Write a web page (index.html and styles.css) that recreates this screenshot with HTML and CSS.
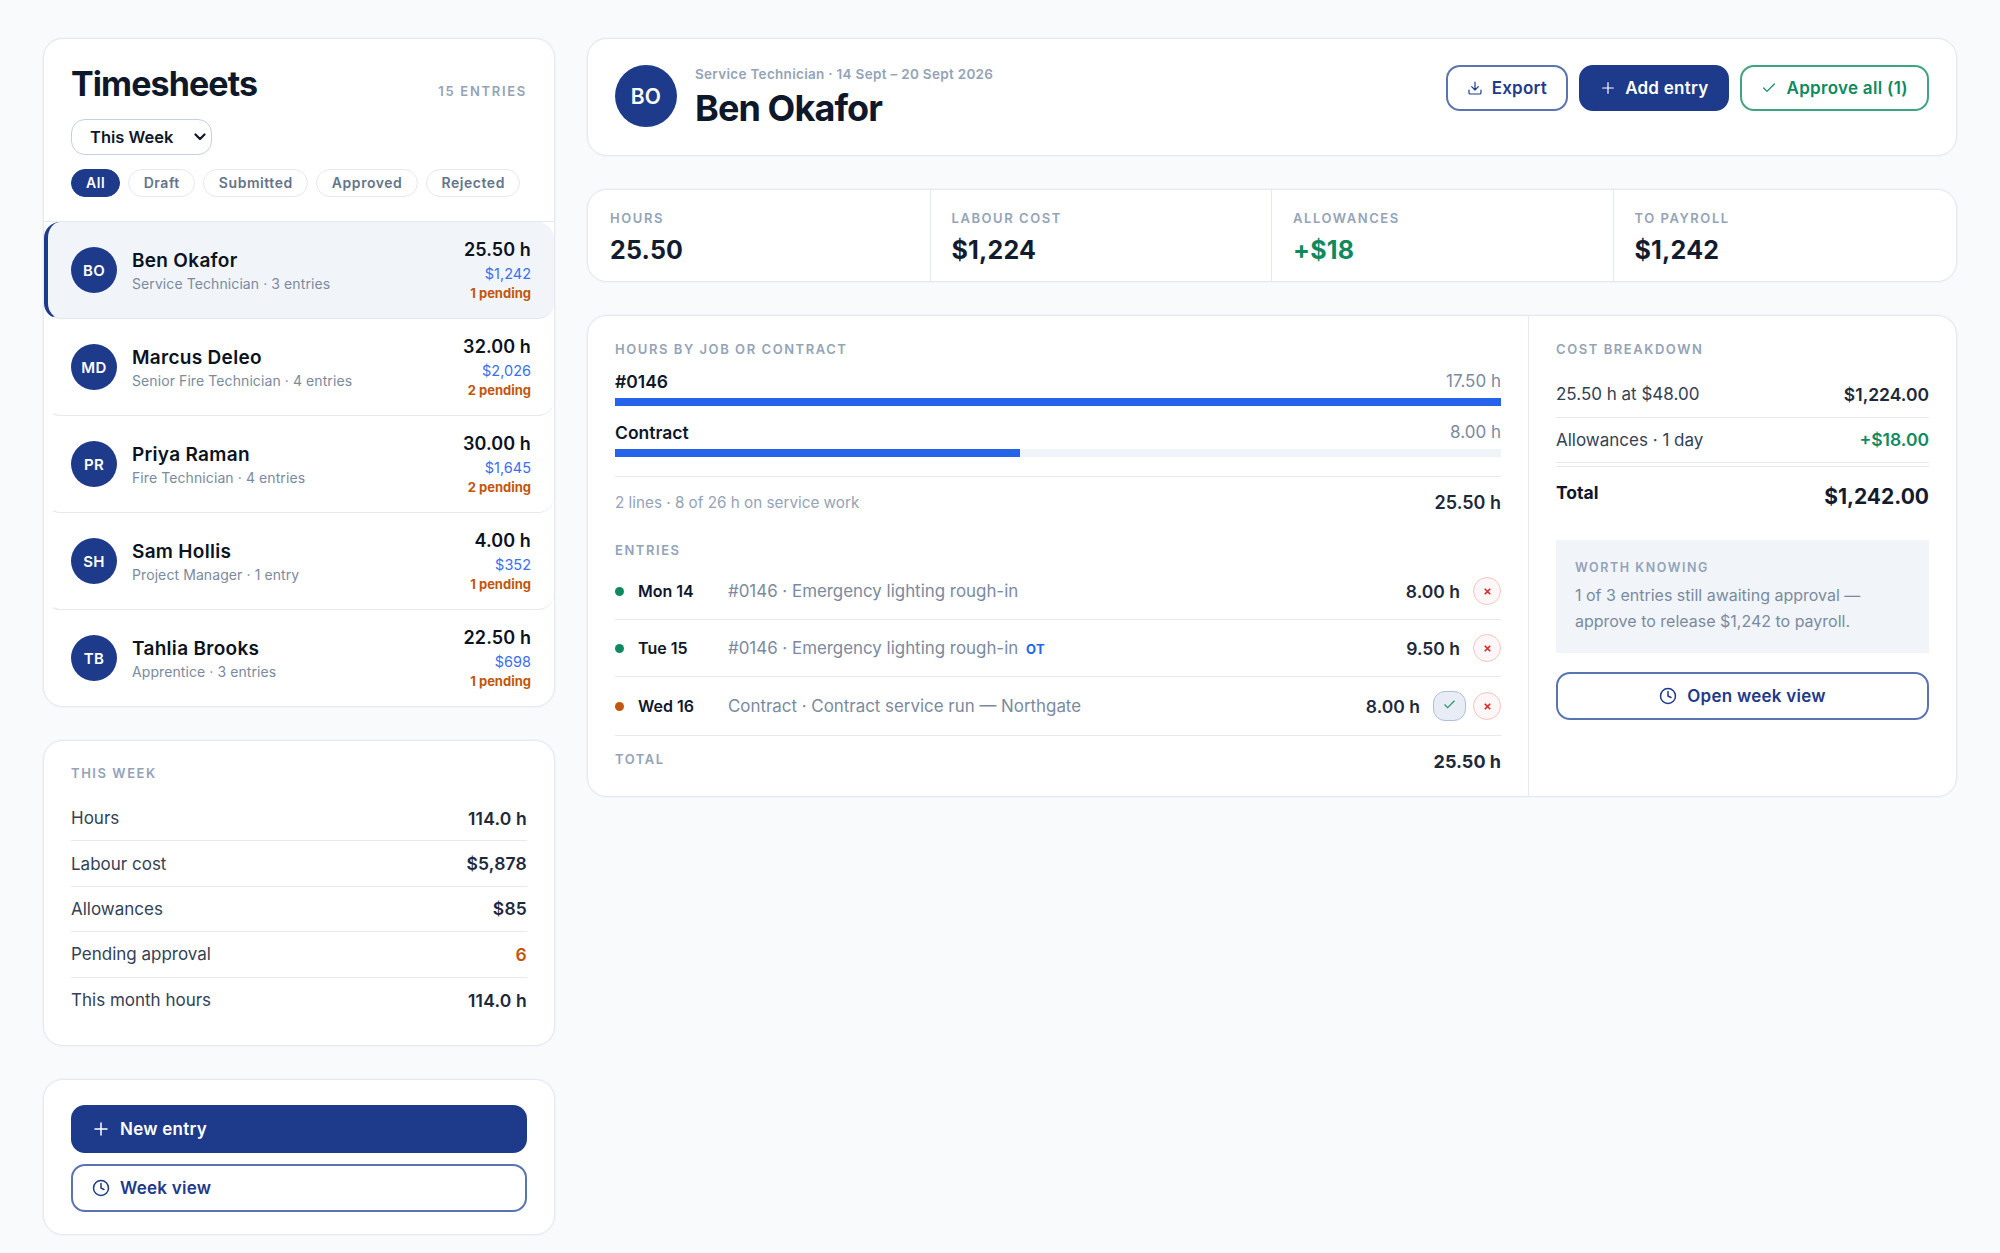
FILE: index.html
```html
<!DOCTYPE html>
<html lang="en">
<head>
    <meta charset="UTF-8">
    <meta name="viewport" content="width=device-width, initial-scale=1.0">
    <title>Timesheets</title>
    <link rel="stylesheet" href="styles.css">
</head>
<body>
    <div class="page">
        <aside class="sidebar">
            <section class="card list-card">
                <div class="list-head">
                    <div class="title-row">
                        <h1>Timesheets</h1>
                        <span class="count">15 ENTRIES</span>
                    </div>
                    <div class="select-wrap">
                        <select class="week-select">
                            <option>This Week</option>
                            <option>Last Week</option>
                        </select>
                        <svg class="select-arrow" viewBox="0 0 12 8"><path d="M1.5 1.5 6 6l4.5-4.5"/></svg>
                    </div>
                    <div class="chips">
                        <span class="chip active">All</span>
                        <span class="chip">Draft</span>
                        <span class="chip">Submitted</span>
                        <span class="chip">Approved</span>
                        <span class="chip">Rejected</span>
                    </div>
                </div>

                <div class="person selected">
                    <div class="avatar">BO</div>
                    <div class="person-info">
                        <div class="person-name">Ben Okafor</div>
                        <div class="person-sub">Service Technician · 3 entries</div>
                    </div>
                    <div class="person-nums">
                        <div class="person-hours">25.50 h</div>
                        <div class="person-cost">$1,242</div>
                        <div class="person-pending">1 pending</div>
                    </div>
                </div>
                <div class="person">
                    <div class="avatar">MD</div>
                    <div class="person-info">
                        <div class="person-name">Marcus Deleo</div>
                        <div class="person-sub">Senior Fire Technician · 4 entries</div>
                    </div>
                    <div class="person-nums">
                        <div class="person-hours">32.00 h</div>
                        <div class="person-cost">$2,026</div>
                        <div class="person-pending">2 pending</div>
                    </div>
                </div>
                <div class="person">
                    <div class="avatar">PR</div>
                    <div class="person-info">
                        <div class="person-name">Priya Raman</div>
                        <div class="person-sub">Fire Technician · 4 entries</div>
                    </div>
                    <div class="person-nums">
                        <div class="person-hours">30.00 h</div>
                        <div class="person-cost">$1,645</div>
                        <div class="person-pending">2 pending</div>
                    </div>
                </div>
                <div class="person">
                    <div class="avatar">SH</div>
                    <div class="person-info">
                        <div class="person-name">Sam Hollis</div>
                        <div class="person-sub">Project Manager · 1 entry</div>
                    </div>
                    <div class="person-nums">
                        <div class="person-hours">4.00 h</div>
                        <div class="person-cost">$352</div>
                        <div class="person-pending">1 pending</div>
                    </div>
                </div>
                <div class="person last">
                    <div class="avatar">TB</div>
                    <div class="person-info">
                        <div class="person-name">Tahlia Brooks</div>
                        <div class="person-sub">Apprentice · 3 entries</div>
                    </div>
                    <div class="person-nums">
                        <div class="person-hours">22.50 h</div>
                        <div class="person-cost">$698</div>
                        <div class="person-pending">1 pending</div>
                    </div>
                </div>
            </section>

            <section class="card week-card">
                <div class="label">This Week</div>
                <div class="week-rows">
                    <div class="stat-row"><span>Hours</span><b>114.0 h</b></div>
                    <div class="stat-row"><span>Labour cost</span><b>$5,878</b></div>
                    <div class="stat-row"><span>Allowances</span><b>$85</b></div>
                    <div class="stat-row"><span>Pending approval</span><b class="orange">6</b></div>
                    <div class="stat-row"><span>This month hours</span><b>114.0 h</b></div>
                </div>
            </section>

            <section class="card action-card">
                <button class="btn primary wide">
                    <svg class="icon" viewBox="0 0 24 24"><path d="M12 4v16M4 12h16"/></svg>
                    New entry
                </button>
                <button class="btn outline wide">
                    <svg class="icon clock" viewBox="0 0 24 24"><circle cx="12" cy="12" r="10"/><path d="M12 6v6l4 2"/></svg>
                    Week view
                </button>
            </section>
        </aside>

        <main class="main">
            <section class="card head-card">
                <div class="avatar big">BO</div>
                <div class="head-text">
                    <div class="head-sub">Service Technician · 14 Sept – 20 Sept 2026</div>
                    <h2>Ben Okafor</h2>
                </div>
                <div class="head-actions">
                    <button class="btn outline">
                        <svg class="icon small" viewBox="0 0 24 24"><path d="M12 3v12M7 10l5 5 5-5M3 15v4a2 2 0 0 0 2 2h14a2 2 0 0 0 2-2v-4"/></svg>
                        Export
                    </button>
                    <button class="btn primary">
                        <svg class="icon small" viewBox="0 0 24 24"><path d="M12 4v16M4 12h16"/></svg>
                        Add entry
                    </button>
                    <button class="btn outline green">
                        <svg class="icon small" viewBox="0 0 24 24"><path d="M20 6 9 17l-5-5"/></svg>
                        Approve all (1)
                    </button>
                </div>
            </section>

            <section class="card kpis">
                <div class="kpi">
                    <div class="label">Hours</div>
                    <div class="kpi-value">25.50</div>
                </div>
                <div class="kpi">
                    <div class="label">Labour cost</div>
                    <div class="kpi-value">$1,224</div>
                </div>
                <div class="kpi">
                    <div class="label">Allowances</div>
                    <div class="kpi-value green-text">+$18</div>
                </div>
                <div class="kpi">
                    <div class="label">To payroll</div>
                    <div class="kpi-value">$1,242</div>
                </div>
            </section>

            <section class="card detail">
                <div class="detail-left">
                    <div class="label">Hours by job or contract</div>
                    <div class="job-head first"><b>#0146</b><span>17.50 h</span></div>
                    <div class="bar"><div class="bar-fill" style="width: 100%"></div></div>
                    <div class="job-head"><b>Contract</b><span>8.00 h</span></div>
                    <div class="bar"><div class="bar-fill" style="width: 45.7%"></div></div>

                    <div class="job-summary">
                        <span>2 lines · 8 of 26 h on service work</span>
                        <b>25.50 h</b>
                    </div>

                    <div class="label entries-label">Entries</div>
                    <div class="entry">
                        <span class="dot"></span>
                        <span class="entry-day">Mon 14</span>
                        <span class="entry-desc">#0146 · Emergency lighting rough-in</span>
                        <span class="entry-hours">8.00 h</span>
                        <button class="round-x"><svg viewBox="0 0 24 24"><path d="M6 6l12 12M18 6 6 18"/></svg></button>
                    </div>
                    <div class="entry">
                        <span class="dot"></span>
                        <span class="entry-day">Tue 15</span>
                        <span class="entry-desc">#0146 · Emergency lighting rough-in <em class="ot">OT</em></span>
                        <span class="entry-hours">9.50 h</span>
                        <button class="round-x"><svg viewBox="0 0 24 24"><path d="M6 6l12 12M18 6 6 18"/></svg></button>
                    </div>
                    <div class="entry tall">
                        <span class="dot amber"></span>
                        <span class="entry-day">Wed 16</span>
                        <span class="entry-desc">Contract · Contract service run — Northgate</span>
                        <span class="entry-hours">8.00 h</span>
                        <button class="tick"><svg viewBox="0 0 24 24"><path d="M20 6 9 17l-5-5"/></svg></button>
                        <button class="round-x"><svg viewBox="0 0 24 24"><path d="M6 6l12 12M18 6 6 18"/></svg></button>
                    </div>
                    <div class="entry-total">
                        <span class="label">Total</span>
                        <b>25.50 h</b>
                    </div>
                </div>

                <div class="detail-right">
                    <div class="label">Cost breakdown</div>
                    <div class="cost-rows">
                        <div class="cost-row"><span>25.50 h at $48.00</span><b>$1,224.00</b></div>
                        <div class="cost-row"><span>Allowances · 1 day</span><b class="green-text">+$18.00</b></div>
                    </div>
                    <div class="cost-total"><span>Total</span><b>$1,242.00</b></div>
                    <div class="note">
                        <div class="label">Worth knowing</div>
                        <p>1 of 3 entries still awaiting approval — approve to release $1,242 to payroll.</p>
                    </div>
                    <button class="btn outline wide centered">
                        <svg class="icon clock" viewBox="0 0 24 24"><circle cx="12" cy="12" r="10"/><path d="M12 6v6l4 2"/></svg>
                        Open week view
                    </button>
                </div>
            </section>
        </main>
    </div>
</body>
</html>
```

FILE: styles.css
```css
* {
    box-sizing: border-box;
}
body {
    margin: 0;
    background-color: #f8fafc;
    color: #0f172a;
    font-family: Inter, "Liberation Sans", sans-serif;
}
.page {
    display: grid;
    grid-template-columns: 512px 1370px;
    gap: 32px;
    padding: 38px 43px 18px;
}
.sidebar,
.main {
    display: flex;
    flex-direction: column;
    gap: 33px;
}
.card {
    background-color: #fff;
    border: 1px solid #e4e9f2;
    border-radius: 20px;
    box-shadow: 0 0 0 1px #f1f4f9;
}
.label {
    color: #94a3b8;
    font-size: 13px;
    font-weight: 600;
    letter-spacing: 1.55px;
    line-height: 18px;
    text-transform: uppercase;
}
.orange {
    color: #c2570c;
}
.green-text {
    color: #0f8a5f;
}

/* Employee list */
.list-head {
    padding: 25px 27px 24px;
    border-bottom: 1px solid #e4e9f2;
}
.title-row {
    display: flex;
    justify-content: space-between;
    align-items: baseline;
}
h1 {
    margin: 0;
    font-size: 34px;
    font-weight: 700;
    letter-spacing: -0.9px;
    line-height: 40px;
}
.count {
    color: #94a3b8;
    font-size: 13px;
    font-weight: 600;
    letter-spacing: 1.7px;
}
.select-wrap {
    position: relative;
    width: 141px;
    margin-top: 15px;
}
.week-select {
    display: block;
    width: 100%;
    height: 36px;
    padding: 0 26px 0 18px;
    appearance: none;
    background-color: #fff;
    border: 1px solid #c5d0e2;
    border-radius: 14px;
    color: #0f172a;
    font-family: inherit;
    font-size: 16.5px;
    font-weight: 600;
}
.select-arrow {
    position: absolute;
    top: 14px;
    right: 6px;
    width: 12px;
    height: 8px;
    fill: none;
    stroke: #0f172a;
    stroke-width: 2.2;
    stroke-linecap: round;
    stroke-linejoin: round;
}
.chips {
    display: flex;
    gap: 8px;
    margin-top: 14px;
}
.chip {
    height: 28px;
    padding: 0 14.5px;
    border: 1px solid #e4e9f2;
    border-radius: 14px;
    color: #64748b;
    font-size: 14px;
    font-weight: 600;
    letter-spacing: 0.55px;
    line-height: 26px;
}
.chip.active {
    padding: 0 14px;
    background-color: #1e3a8a;
    border-color: #1e3a8a;
    color: #fff;
}
.person {
    display: flex;
    align-items: center;
    height: 97px;
    padding: 0 23px 0 23px;
    border-left: 4px solid transparent;
    border-bottom: 1px solid #e4e9f2;
    border-radius: 0 0 16px 16px;
}
.person.selected {
    background-color: #f1f5fa;
    border-left-color: #1e3a8a;
    border-radius: 16px;
}
.person.last {
    height: 96px;
    border-bottom: none;
}
.avatar {
    display: flex;
    align-items: center;
    justify-content: center;
    flex: none;
    width: 46px;
    height: 46px;
    background-color: #1e3a8a;
    border-radius: 50%;
    color: #fff;
    font-size: 15px;
    font-weight: 600;
    letter-spacing: 0.3px;
}
.person-info {
    flex: 1;
    margin-left: 15px;
    padding-top: 2px;
}
.person-name {
    color: #0b1220;
    font-size: 19px;
    font-weight: 600;
    letter-spacing: 0.3px;
    line-height: 24px;
    padding-top: 1px;
}
.person-sub {
    margin-top: 1px;
    color: #7b8aa0;
    font-size: 14px;
    letter-spacing: 0.09px;
    line-height: 20px;
}
.person-nums {
    padding-top: 1px;
    text-align: right;
}
.person-hours {
    color: #0b1220;
    font-size: 18px;
    font-weight: 600;
    letter-spacing: 0.1px;
    line-height: 24px;
}
.person-cost {
    margin-top: 2px;
    color: #3b6ff0;
    font-size: 14.5px;
    line-height: 20px;
}
.person-pending {
    color: #c2570c;
    font-size: 13px;
    font-weight: 700;
    line-height: 19px;
}

/* This week */
.week-card {
    height: 306px;
    padding: 23px 27px 0;
}
.week-rows {
    margin-top: 14px;
}
.stat-row {
    display: flex;
    justify-content: space-between;
    align-items: center;
    height: 45.4px;
    border-bottom: 1px solid #e4e9f2;
    color: #334155;
    font-size: 17px;
}
.stat-row:last-child {
    border-bottom: none;
}
.stat-row b {
    color: #1e293b;
    font-size: 17.5px;
    font-weight: 600;
    letter-spacing: 0.2px;
}
.stat-row b.orange {
    color: #c2570c;
}

/* Buttons */
.btn {
    display: inline-flex;
    align-items: center;
    gap: 9px;
    height: 46px;
    padding: 0 19px;
    background-color: #fff;
    border: 2px solid #5a74b3;
    border-radius: 14px;
    color: #1e3a8a;
    font-family: inherit;
    font-size: 17px;
    font-weight: 600;
    letter-spacing: 0.25px;
}
.btn.primary {
    background-color: #1e3a8a;
    border-color: #1e3a8a;
    color: #fff;
}
.btn.green {
    border-color: #3fa581;
    color: #0f8a5f;
    letter-spacing: 0.3px;
}
.btn.wide {
    width: 100%;
    height: 48px;
    gap: 10px;
}
.btn.centered {
    justify-content: center;
}
.icon {
    width: 18px;
    height: 18px;
    fill: none;
    stroke: currentColor;
    stroke-width: 2;
    stroke-linecap: round;
    stroke-linejoin: round;
}
.icon.small {
    width: 16px;
    height: 16px;
    stroke-width: 1.8;
}
.action-card {
    display: flex;
    flex-direction: column;
    gap: 11px;
    padding: 25px 27px 22px;
}

/* Person header */
.head-card {
    display: flex;
    align-items: flex-start;
    height: 118px;
    padding: 26px 27px 0;
}
.avatar.big {
    width: 62px;
    height: 62px;
    font-size: 21px;
}
.head-text {
    flex: 1;
    margin-left: 18px;
}
.head-sub {
    color: #94a3b8;
    font-size: 13.5px;
    font-weight: 600;
    letter-spacing: 0.3px;
    line-height: 18px;
}
h2 {
    margin: 3px 0 0;
    font-size: 36px;
    font-weight: 700;
    letter-spacing: -0.9px;
    line-height: 44px;
}
.head-actions {
    display: flex;
    gap: 11px;
}

/* KPI strip */
.kpis {
    display: grid;
    grid-template-columns: 341.5px 341.5px 341.5px 1fr;
    height: 93px;
}
.kpi {
    padding: 19px 21px 0;
    border-left: 1px solid #e4e9f2;
}
.kpi:first-child {
    padding-left: 22px;
    border-left: none;
}
.kpi-value {
    margin-top: 6px;
    color: #131c2e;
    font-size: 25px;
    font-weight: 700;
    letter-spacing: 0.2px;
    line-height: 34px;
}
.kpi-value.green-text {
    color: #0f8a5f;
}

/* Detail panel */
.detail {
    display: grid;
    grid-template-columns: 941px 1fr;
    height: 482px;
}
.detail-left {
    padding: 24px 27px 0;
    border-right: 1px solid #e4e9f2;
}
.job-head {
    display: flex;
    justify-content: space-between;
    align-items: center;
    height: 24px;
    margin-top: 14px;
    color: #7b8aa0;
    font-size: 17px;
}
.job-head.first {
    margin-top: 11px;
}
.job-head b {
    color: #0f172a;
    font-size: 17.5px;
    font-weight: 600;
}
.bar {
    height: 8px;
    margin-top: 5px;
    background-color: #f0f3f8;
}
.bar-fill {
    height: 100%;
    background-color: #2563eb;
}
.job-summary {
    display: flex;
    justify-content: space-between;
    align-items: center;
    height: 52px;
    margin-top: 19px;
    border-top: 1px solid #e4e9f2;
    color: #94a3b8;
    font-size: 15.25px;
}
.job-summary b {
    color: #1e293b;
    font-size: 18px;
    font-weight: 600;
}
.entries-label {
    margin: 13px 0 4px;
}
.entry {
    display: flex;
    align-items: center;
    height: 57px;
    border-bottom: 1px solid #e4e9f2;
}
.entry.tall {
    height: 59px;
}
.dot {
    flex: none;
    width: 9px;
    height: 9px;
    background-color: #0f8a5f;
    border-radius: 50%;
}
.dot.amber {
    background-color: #c2570c;
}
.entry-day {
    flex: none;
    width: 90px;
    margin-left: 14px;
    font-size: 16px;
    font-weight: 600;
}
.entry-desc {
    flex: 1;
    color: #7b8aa0;
    font-size: 16.9px;
}
.ot {
    margin-left: 3px;
    color: #2563eb;
    font-size: 13px;
    font-style: normal;
    font-weight: 700;
    letter-spacing: 0.4px;
}
.entry-hours {
    color: #1e293b;
    font-size: 17.5px;
    font-weight: 600;
}
.round-x {
    display: flex;
    align-items: center;
    justify-content: center;
    width: 28px;
    height: 28px;
    margin-left: 13px;
    padding: 0;
    background-color: #fff7f7;
    border: 1px solid #f9c2c2;
    border-radius: 50%;
}
.round-x svg {
    width: 11px;
    height: 11px;
    fill: none;
    stroke: #dc2626;
    stroke-width: 3.6;
}
.tick {
    display: flex;
    align-items: center;
    justify-content: center;
    width: 33px;
    height: 30px;
    margin-left: 13px;
    padding: 0;
    background-color: #e8edf5;
    border: 1px solid #b0bfda;
    border-radius: 12px;
}
.tick + .round-x {
    margin-left: 7px;
}
.tick svg {
    width: 15px;
    height: 15px;
    margin-top: -3px;
    fill: none;
    stroke: #2f9a74;
    stroke-width: 2.2;
}
.entry-total {
    display: flex;
    justify-content: space-between;
    align-items: center;
    height: 50px;
}
.entry-total .label {
    margin-top: -4px;
}
.entry-total b {
    color: #1e293b;
    font-size: 18px;
    font-weight: 700;
}
.detail-right {
    padding: 24px 27px 0;
}
.cost-rows {
    margin-top: 14px;
}
.cost-row {
    display: flex;
    justify-content: space-between;
    align-items: center;
    height: 45.5px;
    border-bottom: 1px solid #e4e9f2;
    color: #334155;
    font-size: 17px;
}
.cost-row b {
    color: #1e293b;
    font-size: 17.5px;
    font-weight: 600;
}
.cost-row b.green-text {
    color: #0f8a5f;
}
.cost-total {
    display: flex;
    justify-content: space-between;
    align-items: center;
    height: 59px;
    margin-top: 3px;
    border-top: 1px solid #e4e9f2;
}
.cost-total span {
    margin-top: -7px;
    font-size: 17.5px;
    font-weight: 700;
}
.cost-total b {
    color: #131c2e;
    font-size: 21px;
    font-weight: 700;
}
.note {
    margin-top: 15px;
    padding: 19px 19px;
    background-color: #f1f5fa;
}
.note .label {
    font-size: 12.5px;
}
.note p {
    margin: 5px 0 0;
    color: #7b8aa0;
    font-size: 16px;
    line-height: 26px;
}
.detail-right .btn {
    margin-top: 19px;
}
```
